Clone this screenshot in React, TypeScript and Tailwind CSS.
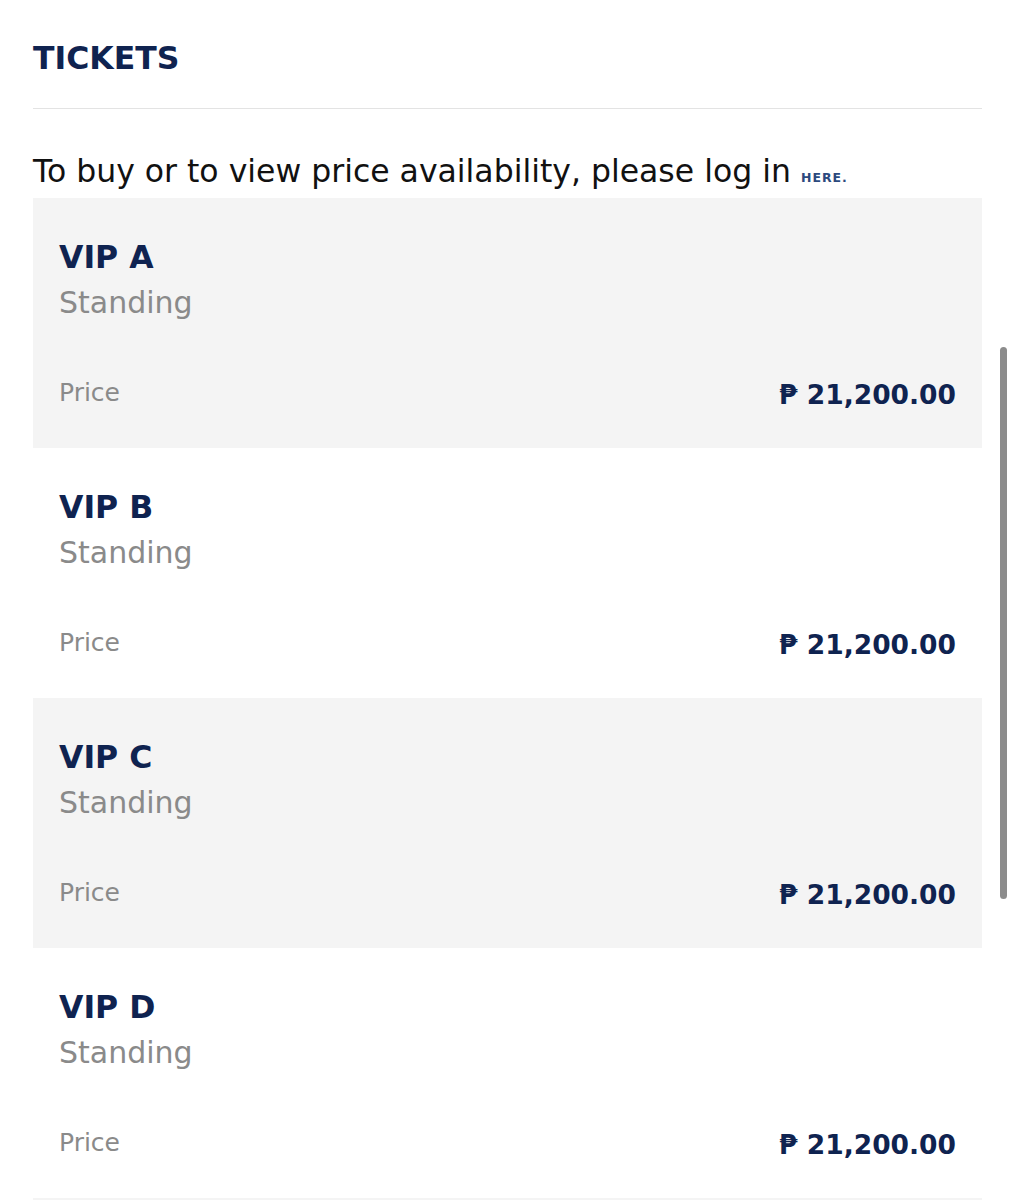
import React from "react";

const tickets = [
  { name: "VIP A", kind: "Standing", price: "21,200.00" },
  { name: "VIP B", kind: "Standing", price: "21,200.00" },
  { name: "VIP C", kind: "Standing", price: "21,200.00" },
  { name: "VIP D", kind: "Standing", price: "21,200.00" },
];

export default function App() {
  return (
    <div
      className="relative h-[1200px] overflow-hidden bg-white px-[33px] text-black"
      style={{ fontFamily: '"DejaVu Sans", "Noto Sans", sans-serif' }}
    >
      <h2 className="pt-[39px] pb-[31px] text-[31.5px] font-bold leading-[38px] text-[#0f2350]">
        TICKETS
      </h2>
      <div className="h-px bg-[#e3e3e3]" />

      <p className="mt-[42px] text-[31.5px] leading-[40px] text-[#111]">
        To buy or to view price availability, please log in{" "}
        <a className="text-[12.5px] font-bold tracking-[1px] text-[#2c4a7e]">HERE.</a>
      </p>

      <div className="flex flex-col">
        {tickets.map((t, i) => (
          <div
            key={t.name}
            className={`flex h-[250px] shrink-0 flex-col px-[26px] pt-[39px] ${
              i % 2 === 0 ? "bg-[#f4f4f4]" : "bg-white"
            }`}
          >
            <div className="text-[31.5px] font-bold leading-[40px] text-[#0f2350]">{t.name}</div>
            <div className="mt-[6px] text-[30px] leading-[40px] text-[#8a8a8a]">{t.kind}</div>
            <div className="mt-[48px] flex items-center justify-between">
              <span className="text-[25px] text-[#8a8a8a]">Price</span>
              <span className="pt-[4px] text-[26.5px] font-bold text-[#0f2350]">₱ {t.price}</span>
            </div>
          </div>
        ))}
        <div className="h-[250px] shrink-0 bg-[#f4f4f4]" />
      </div>

      <div className="absolute right-[8px] top-[347px] h-[552px] w-[7px] rounded-full bg-[#8c8c8c]" />
    </div>
  );
}
